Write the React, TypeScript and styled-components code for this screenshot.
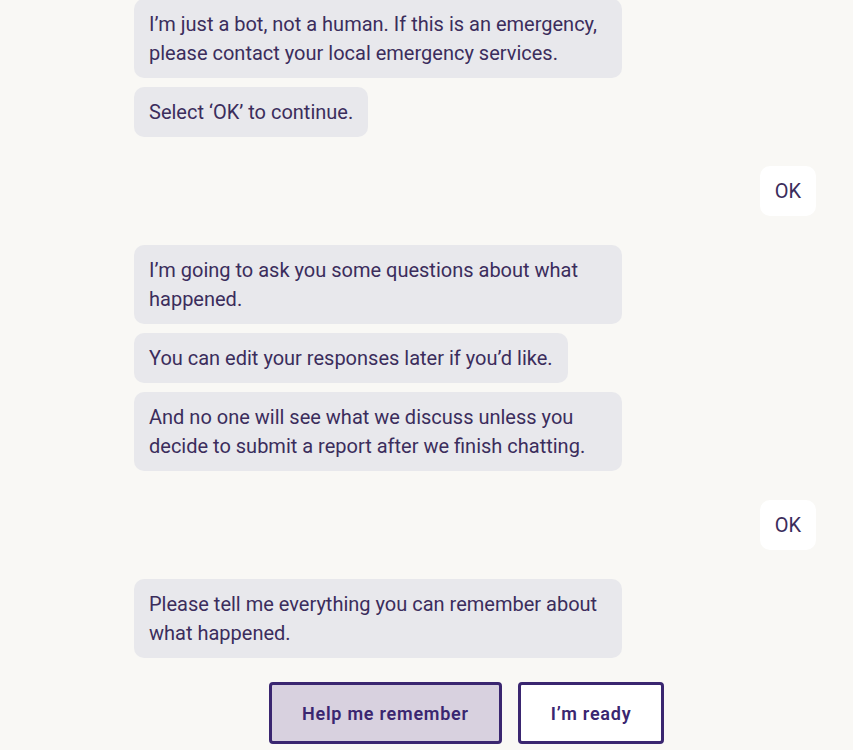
import styled, { createGlobalStyle } from "styled-components";

const GlobalStyle = createGlobalStyle`
  html, body {
    margin: 0;
    padding: 0;
    background: #f9f8f5;
  }
  body {
    font-family: Roboto, "Liberation Sans", sans-serif;
    color: #3b2d5c;
  }
`;

type Message = { from: "bot" | "user"; text: string };

const groups: Message[][] = [
  [
    {
      from: "bot",
      text: "I’m just a bot, not a human. If this is an emergency, please contact your local emergency services.",
    },
    { from: "bot", text: "Select ‘OK’ to continue." },
  ],
  [{ from: "user", text: "OK" }],
  [
    {
      from: "bot",
      text: "I’m going to ask you some questions about what happened.",
    },
    { from: "bot", text: "You can edit your responses later if you’d like." },
    {
      from: "bot",
      text: "And no one will see what we discuss unless you decide to submit a report after we finish chatting.",
    },
  ],
  [{ from: "user", text: "OK" }],
  [
    {
      from: "bot",
      text: "Please tell me everything you can remember about what happened.",
    },
  ],
];

export default function App() {
  return (
    <>
      <GlobalStyle />
      <Chat>
        {groups.map((group, i) => (
          <Group key={i}>
            {group.map((m, j) => (
              <Bubble key={j} $user={m.from === "user"}>
                {m.text}
              </Bubble>
            ))}
          </Group>
        ))}
        <Actions>
          <ActionButton $primary>Help me remember</ActionButton>
          <ActionButton>I’m ready</ActionButton>
        </Actions>
      </Chat>
    </>
  );
}

const Chat = styled.div`
  display: flex;
  flex-direction: column;
  gap: 29px;
  margin-top: -1px;
  padding: 0 37px 0 134px;
`;

const Group = styled.div`
  display: flex;
  flex-direction: column;
  gap: 9px;
`;

const Bubble = styled.div<{ $user?: boolean }>`
  align-self: ${(p) => (p.$user ? "flex-end" : "flex-start")};
  max-width: 458px;
  padding: 10.5px 15px;
  border-radius: 10px;
  background: ${(p) => (p.$user ? "#ffffff" : "#e8e8ec")};
  font-size: 20px;
  line-height: 29px;
  color: #3b2d5c;
`;

const Actions = styled.div`
  display: flex;
  gap: 16px;
  margin: -5px 0 0 135px;
`;

const ActionButton = styled.button<{ $primary?: boolean }>`
  height: 62px;
  padding: 0 30px;
  border: 3px solid #3a2670;
  border-radius: 4px;
  background: ${(p) => (p.$primary ? "#d8d1df" : "#ffffff")};
  color: #3a2670;
  font-family: Roboto, "Liberation Sans", sans-serif;
  font-size: 18px;
  font-weight: 600;
  letter-spacing: 0.75px;
  cursor: pointer;
`;
